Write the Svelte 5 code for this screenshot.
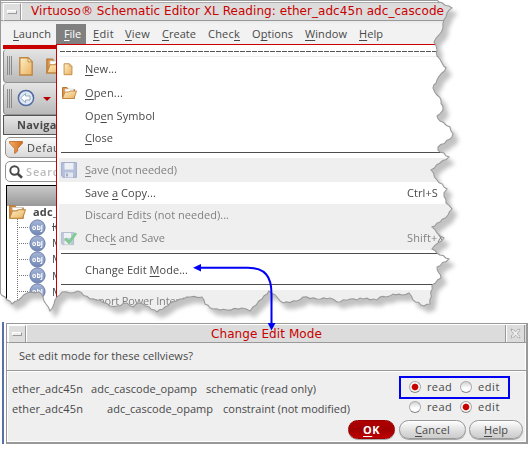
<script>
  const menus = [
    ['Launch', 0, 37, 10, 53],
    ['File', 0, 16, 8, 30],
    ['Edit', 0, 20, 7, 32],
    ['View', 0, 24, 7, 37],
    ['Create', 0, 33, 7, 46],
    ['Check', 4, 31, 7, 44],
    ['Options', 1, 40, 7, 53],
    ['Window', 0, 41, 7, 54],
    ['Help', 0, 23, 7, 40]
  ];
  const items = [
    { t: 'New...', u: 0, w: 31, h: 24, icon: 'doc' },
    { t: 'Open...', u: 0, w: 37, h: 24, icon: 'folder' },
    { t: 'Open Symbol', u: 2, w: 69, h: 22 },
    { t: 'Close', u: 0, w: 27, h: 22 },
    { sep: true, h: 9 },
    { t: 'Save (not needed)', u: 0, w: 91, h: 24, off: true, icon: 'disk' },
    { t: 'Save a Copy...', u: 5, w: 70, h: 22, key: 'Ctrl+S', kw: 30 },
    { t: 'Discard Edits (not needed)...', u: 11, w: 143, h: 22, off: true },
    { t: 'Check and Save', u: 4, w: 79, h: 24, off: true, icon: 'check', key: 'Shift+X', kw: 36 },
    { sep: true, h: 8 },
    { t: 'Change Edit Mode...', u: 12, w: 102, h: 23 },
    { sep: true, h: 9 },
    { t: 'Import Power Intent...', u: 0, w: 108, h: 22, off: true }
  ];
  const rows = [
    { cells: [['ether_adc45n', 70, 0], ['adc_cascode_opamp', 105, 9], ['schematic (read only)', 109, 10]], sel: 'read' },
    { cells: [['ether_adc45n', 70, 0], ['adc_cascode_opamp', 105, 25], ['constraint (not modified)', 126, 11]], sel: 'edit' }
  ];

  const right = [
    [437, 0], [439, 2], [452, 8], [447, 13], [444, 20], [443, 28], [439, 35], [434, 42], [437, 50], [437, 56],
    [442, 63], [446, 68], [442, 73], [437, 80], [433, 88], [437, 95], [441, 100], [443, 110], [437, 116],
    [440, 121], [450, 127], [453, 134], [450, 139], [438, 147], [438, 150], [449, 157], [440, 163], [431, 170],
    [437, 180], [447, 189], [444, 193], [446, 203], [452, 209], [448, 215], [440, 222], [432, 227], [437, 233],
    [444, 238], [438, 243], [432, 249], [437, 253], [449, 259], [437, 267], [439, 273], [441, 278], [432, 285], [430, 304]
  ];
  const bottom = [
    [424, 306], [413, 300], [409, 293], [402, 295], [393, 294], [386, 297], [380, 297], [377, 300], [360, 298],
    [357, 300], [350, 299], [337, 302], [330, 298], [317, 299], [303, 297], [297, 301], [283, 303], [277, 297],
    [269, 291], [262, 299], [253, 307], [250, 311], [242, 308], [227, 310], [213, 309], [205, 304], [202, 297],
    [190, 297], [180, 299], [173, 302], [165, 307], [157, 312], [143, 304], [139, 303], [133, 307], [127, 303],
    [117, 306], [110, 306], [100, 300], [90, 299], [78, 291], [70, 293], [62, 292], [57, 297], [54, 304], [50, 311],
    [46, 304], [43, 297], [39, 292], [27, 293], [21, 298], [12, 304], [5, 297], [0, 293]
  ];
  // Adds a small alternating notch between neighbouring points of the tear.
  function roughen(pts) {
    const out = [pts[0]];
    for (let i = 1; i < pts.length; i++) {
      const [ax, ay] = pts[i - 1];
      const [bx, by] = pts[i];
      const d = Math.hypot(bx - ax, by - ay);
      const n = Math.max(1, Math.round(d / 3.5));
      for (let k = 1; k < n; k++) {
        const s = ((i + k) % 2 ? 1 : -1) * 0.6;
        out.push([ax + ((bx - ax) * k) / n + (s * (by - ay)) / d, ay + ((by - ay) * k) / n - (s * (bx - ax)) / d]);
      }
      out.push(pts[i]);
    }
    return out;
  }
  const tear = roughen([...right, ...bottom]);
  const clip = 'polygon(0 0,' + tear.map(([x, y]) => `${x.toFixed(1)}px ${y.toFixed(1)}px`).join(',') + ')';
  const line = tear.map(([x, y]) => `${x.toFixed(1)},${y.toFixed(1)}`).join(' ');

  // Spreads letters so that the label fills the given width.
  function fit(node, w) {
    if (!w) return;
    const natural = node.getBoundingClientRect().width;
    node.style.letterSpacing = (w + 1 - natural) / node.textContent.length + 'px';
  }
</script>

{#snippet label(t, u, w)}<span class="label" use:fit={w}>{#if u >= 0}{t.slice(0, u)}<u>{t[u]}</u>{t.slice(u + 1)}{:else}{t}{/if}</span>{/snippet}

{#snippet icon(name, size)}
  <svg width={size} height={size} viewBox="0 0 16 16">
    {#if name === 'doc'}
      <path d="M3.500 2h6l3 3v9.500h-9z" fill="url(#gold)" stroke="#bd8743" />
      <path d="M9.500 2v3h3z" fill="#fff3cf" stroke="#bd8743" stroke-width=".7" />
    {:else if name === 'folder'}
      <path d="M1.500 13.500V2.500h4.500l1.500 2h6v9z" fill="#dd9447" stroke="#b87832" />
      <path d="M4 4h8.500v6H4z" fill="#fff" stroke="#ccc" stroke-width=".6" />
      <path d="M1.500 13.500l2.500-6.500h4l1-1h6.500l-2.500 7.500z" fill="url(#gold)" stroke="#bd8743" stroke-width=".9" />
    {:else if name === 'disk'}
      <path d="M.6.6h14.800v14.800H2.200L.6 14z" fill="#b5c0da" stroke="#a0acca" />
      <path d="M3.500 1h9v6.500h-9z" fill="#edf0f5" />
      <path d="M4 10.500h8v5H4z" fill="#e3e7ef" />
      <path d="M5 11.500h2v3H5z" fill="#9daac8" />
    {:else if name === 'check'}
      <path d="M.6 2.600h12v12H1.600l-1-1z" fill="#c0cadb" stroke="#b1bccf" />
      <path d="M3 3h7v5H3zM3.500 11h6v3.500h-6z" fill="#eef1f4" />
      <path d="M4.500 8.500l3.500 4 7-9.500" fill="none" stroke="#82ca92" stroke-width="2.800" />
    {/if}
  </svg>
{/snippet}

<div class="page">
  <svg class="defs" width="0" height="0">
    <defs>
      <linearGradient id="gold" x2="1" y2="1"><stop stop-color="#fff0c5" /><stop offset="1" stop-color="#e9b15f" /></linearGradient>
      <linearGradient id="ball" x2="0" y2="1"><stop stop-color="#a6b5d7" /><stop offset="1" stop-color="#7187b7" /></linearGradient>
      <linearGradient id="orange" x2="1" y2="0"><stop stop-color="#f7ae68" /><stop offset="1" stop-color="#cf6a1c" /></linearGradient>
    </defs>
  </svg>

  <div class="torn">
    <div class="editor" style:clip-path={clip}>
      <div class="titlebar">
        <div class="sysbtn"><i></i></div>
        <div class="title">{@render label('Virtuoso® Schematic Editor XL Reading: ether_adc45n adc_cascode', -1, 412)}</div>
      </div>
      <div class="menubar">
        {#each menus as [t, u, w, l, full]}
          <div class="menu" class:active={t === 'File'} style:padding-left="{l}px" style:width="{full}px">{@render label(t, u, w)}</div>
        {/each}
      </div>
      <div class="body">
        <div class="side">
          <div class="redbar"></div>
          <div class="tool t1"><b class="grip"></b>{@render icon('doc', 22)}<span class="second">{@render icon('folder', 20)}</span></div>
          <div class="tool t2">
            <b class="grip"></b>
            <svg width="18" height="18" viewBox="0 0 18 18"><circle cx="9" cy="9" r="7.600" fill="#e0e9f3" stroke="#516da2" stroke-width="1.500" /><path d="M3.500 9l5-4.500v2.500H13v4H8.500v2.500z" fill="#fff" stroke="#7e9bb8" stroke-width=".8" /></svg>
            <svg class="drop" width="8" height="4"><path d="M0 0h8l-4 4z" fill="#b40000" /></svg>
          </div>
          <div class="nav">{@render label('Navigator', -1, 56)}</div>
          <div class="field filter">
            <svg width="14" height="13" viewBox="0 0 14 13"><path d="M.5.5h13v1.500L8.700 7.500V10l-3 2.500v-5L.5 2z" fill="url(#orange)" stroke="#b96625" stroke-width=".8" /></svg>
            {@render label('Default', -1, 40)}
          </div>
          <div class="field search">
            <svg width="14" height="14" viewBox="0 0 14 14"><circle cx="5.500" cy="5.500" r="4.200" fill="none" stroke="#484848" stroke-width="1.900" /><path d="M8.700 8.700l4.300 4" stroke="#484848" stroke-width="2.600" /></svg>
            {@render label('Search', -1, 40)}
          </div>
          <div class="tree">
            <div class="treehead"></div>
            <div class="root">{@render icon('folder', 18)}{@render label('adc_cascode', -1, 70)}</div>
            <div class="kids">
              {#each ['I0', 'M0', 'M1', 'M2', 'M3'] as k, i}
                <div class="kid"><i></i>
                  <svg width="17" height="17" viewBox="0 0 17 17"><circle cx="8.500" cy="8.500" r="7.600" fill="url(#ball)" stroke="#6b7da6" /><text x="8.500" y="11" text-anchor="middle" class="obj">obj</text></svg>
                  <span class:cut={i === 0}>{k}</span></div>
              {/each}
            </div>
          </div>
        </div>
        <div class="dropmenu">
          <div class="tearoff"><svg width="400" height="2"><path d="M1 1H400" stroke="#555" stroke-width="1" stroke-dasharray="5 1" shape-rendering="crispEdges" /></svg></div>
          {#each items as it}
            {#if it.sep}
              <div class="sep" style:height="{it.h}px"></div>
            {:else}
              <div class="item" class:off={it.off} style:height="{it.h}px">
                <span class="ic">{#if it.icon}{@render icon(it.icon, it.icon === 'doc' ? 14 : 16)}{/if}</span>
                {@render label(it.t, it.u, it.w)}
                {#if it.key}<span class="key">{@render label(it.key, -1, it.kw)}</span>{/if}
              </div>
            {/if}
          {/each}
        </div>
      </div>
    </div>
    <svg class="edge" width="531" height="320"><polyline points={line} fill="none" stroke="#999" stroke-width="1.100" /></svg>
  </div>

  <div class="lower">
    <div class="bluebar"></div>
    <div class="dialog">
      <div class="dtitle">
        <div class="sysbtn"><i></i></div>
        <div class="dt">{@render label('Change Edit Mode', -1, 110)}</div>
        <div class="close"><svg width="11" height="11" viewBox="0 0 11 11"><path d="M1 1l3 1 1.500 2L7 2l3-1-1 3-2 1.500L9 7l1 3-3-1-1.500-2L4 9l-3 1 1-3 2-1.500L2 4z" fill="#eee" stroke="#999" stroke-width=".8" stroke-dasharray="2 .7" /></svg></div>
      </div>
      <div class="question">{@render label('Set edit mode for these cellviews?', -1, 173)}</div>
      <div class="rows">
        {#each rows as r, i}
          <div class="row">
            {#each r.cells as [t, w, g]}
              <span class="cell" style:margin-left="{g}px" style:width="{w}px">{@render label(t, -1, w)}</span>
            {/each}
            <div class="choice" class:framed={i === 0}>
              <span class="radio" class:on={r.sel === 'read'}></span><span class="opt">{@render label('read', -1, 24)}</span>
              <span class="radio" class:on={r.sel === 'edit'}></span><span class="opt">{@render label('edit', -1, 21)}</span>
            </div>
          </div>
        {/each}
      </div>
      <div class="buttons">
        <div class="btn ok">{@render label('OK', 0, 16)}</div>
        <div class="btn cancel">{@render label('Cancel', 0, 34)}</div>
        <div class="btn help">{@render label('Help', 0, 23)}</div>
      </div>
    </div>
  </div>

  <svg class="arrow" width="531" height="340">
    <path d="M198 267.800H248C265 268 271.500 276 271.500 294V326" fill="none" stroke="#0000f5" stroke-width="2" />
    <path d="M193 267.800l8-3.700v7.400zM267.700 323h7.800l-4 7.500z" fill="#0000f5" />
  </svg>
</div>

<style>
  :global(body) { margin: 0; background: #fff; }
  .page { position: relative; width: 531px; height: 450px; overflow: hidden; background: #fff; font: 11px/16px "Open Sans", "Noto Sans", sans-serif; color: #484848; display: flex; flex-direction: column; }
  .page * { box-sizing: border-box; }
  .defs { position: absolute; }
  svg { display: block; flex: none; }
  .label { white-space: pre; display: inline-block; flex: none; }
  u { text-decoration: underline; text-decoration-thickness: 1px; text-underline-offset: 2px; text-decoration-skip-ink: none; }
  .torn { position: relative; height: 322px; flex: none; filter: drop-shadow(5px 6px 2px rgba(0, 0, 0, .24)); }
  .editor { width: 531px; height: 320px; background: #fff; display: flex; flex-direction: column; }
  .edge { position: absolute; left: 0; top: 0; }
  .arrow { position: absolute; left: 0; top: 0; }

  .titlebar { height: 21px; border-top: 1px solid #999; border-left: 1px solid #999; border-bottom: 1px solid #999; background: #dcdcdc; display: flex; padding-left: 2px; box-shadow: inset 0 1px #fff, inset 0 2px #aaa; flex: none; padding-top: 2px; }
  .sysbtn { width: 18px; height: 18px; border: 1px solid #fff; border-right-color: #999; border-bottom-color: #999; background: #dedede; display: flex; align-items: center; justify-content: center; flex: none; }
  .sysbtn i { width: 10px; height: 4px; background: #eee; border: 1px solid #fff; border-right-color: #999; border-bottom-color: #999; }
  .title { font: 12px/17px "DejaVu Sans", sans-serif; color: #c80000; border-left: 1px solid #fff; padding-left: 9px; flex: 1; }

  .menubar { height: 23px; background: linear-gradient(#e8e8e8, #f2f2f2 3px); border-left: 1px solid #999; padding: 3px 0 0 2px; display: flex; flex: none; }
  .menu { height: 20px; line-height: 20px; flex: none; }
  .menu.active { background: #808080; color: #fff; }
  .body { display: flex; flex: 1; min-height: 0; border-left: 1px solid #999; padding-left: 2px; }
  .side { width: 53px; overflow: hidden; flex: none; display: flex; flex-direction: column; }
  .redbar { height: 5px; background: #c80000; border-top: 1px solid #efefef; flex: none; }
  .tool { display: flex; align-items: center; background: linear-gradient(#e5e5e5, #b9b9b9); border-left: 1px solid #888; border-bottom: 1px solid #929292; border-radius: 4px 0 0 4px; padding-left: 3px; flex: none; }
  .t1 { height: 34px; }
  .t2 { height: 32px; padding-bottom: 1px; }
  .grip { width: 5px; height: 19px; border-left: 1px solid #8a8a8a; border-right: 1px solid #8a8a8a; background: linear-gradient(90deg, transparent 1px, #8a8a8a 1px 2px, transparent 2px); margin-right: 5px; flex: none; }
  .t1 .grip { margin-right: 3px; }
  .second { margin-left: 8px; }
  .drop { margin-left: 8px; margin-top: 2px; }
  .nav { height: 20px; flex: none; border: 1px solid #555; border-right: 0; background: linear-gradient(#e6e6e6, #c4c4c4); padding-left: 13px; line-height: 17px; font-weight: 700; }
  .field { height: 21px; flex: none; margin-left: 2px; border: 1px solid #929292; border-radius: 5px; width: 80px; display: flex; align-items: center; }
  .filter { margin-top: 2px; padding-left: 3px; gap: 4px; background: linear-gradient(#fafafa, #d9d9d9); }
  .search { margin-top: 3px; padding-left: 3px; gap: 3px; background: #fff; color: #bbb; font-weight: 600; }
  .tree { margin: 3px 0 0 3px; border-left: 1px solid #000; border-top: 1px solid #000; background: #fff; width: 80px; flex: 1; }
  .treehead { height: 20px; background: linear-gradient(#c8c8c8, #999); }
  .root { height: 11px; display: flex; align-items: center; gap: 6px; font-weight: 700; padding-left: 1px; }
  .root .label { padding-left: 1px; }
  .kids { margin-left: 10px; border-left: 1px dotted #777; margin-top: 2px; }
  .kid { height: 16.200px; display: flex; align-items: center; }
  .kid i { width: 9px; margin: 0 1px 0 1px; border-top: 1px dotted #777; flex: none; }
  .kid span { margin-left: 6px; }
  .cut { text-decoration: line-through; }
  .obj { font: 700 7px "Open Sans", sans-serif; fill: #fff; }

  .dropmenu { flex: 1; background: #fff; border-top: 1px solid #c80000; border-left: 1px solid #c80000; padding-left: 2px; display: flex; flex-direction: column; }
  .tearoff { height: 12px; border-bottom: 1px solid #eee; padding-top: 5px; flex: none; }
  .item { display: flex; align-items: center; flex: none; }
  .off { background: #efefef; color: #808080; }
  .ic { width: 26px; padding-left: 2px; flex: none; }
  .key { margin-left: auto; width: 124px; }
  .sep { flex: none; padding: 3px 0 0 2px; }
  .sep::before { content: ""; display: block; height: 1px; background: #4d4d4d; }

  .lower { display: flex; padding-left: 2px; flex: none; }
  .bluebar { width: 2px; height: 122px; background: #5870a8; margin-right: 2px; }
  .dialog { margin-top: 1px; width: 522px; height: 121px; background: #efefef; border: 1px solid #999; border-right-width: 2px; border-bottom-width: 2px; box-shadow: inset 1px 1px #fff, inset -1px -1px #fff; display: flex; flex-direction: column; }
  .dtitle { display: flex; height: 19px; padding: 1px 1px 0; background: #dcdcdc; border-bottom: 1px solid #999; box-shadow: inset 1px 1px #fff; flex: none; }
  .dt { flex: 1; border-left: 1px solid #fff; border-right: 1px solid #999; font: 12px/18px "DejaVu Sans", sans-serif; color: #c80000; padding-left: 184px; }
  .close { width: 19px; display: flex; justify-content: center; align-items: center; border-left: 1px solid #fff; border-right: 1px solid #999; }
  .question { height: 28px; padding: 4px 0 0 12px; line-height: 18px; border-bottom: 1px solid #999; box-shadow: 0 1px #fff; flex: none; }
  .rows { padding-top: 6px; height: 46px; flex: none; }
  .row { height: 20px; display: flex; align-items: center; padding: 3px 16px 0 5px; }
  .cell { flex: none; }
  .choice { margin-left: auto; width: 111px; height: 23px; padding-left: 8px; display: flex; align-items: center; flex: none; border: 2px solid transparent; margin-top: -3px; }
  .framed { border-color: #0000f5; }
  .radio { width: 12px; height: 12px; border-radius: 50%; background: linear-gradient(#d2d2d2, #fff 60%); border: 1px solid #aaa; border-bottom-color: #888; flex: none; }
  .on { background: radial-gradient(circle, #c80000 0 2.800px, #f7f7f7 3.800px); }
  .opt { margin-left: 6px; width: 33px; flex: none; }
  .buttons { display: flex; justify-content: flex-end; gap: 3px; padding-right: 3px; padding-top: 3px; }
  .btn { height: 19px; border-radius: 10px; display: flex; justify-content: center; line-height: 18px; border: 1px solid #999; background: linear-gradient(#fff, #ddd 60%, #ccc); box-shadow: 0 1px #aaa; }
  .ok { width: 47px; background: linear-gradient(#b00000, #a00000 50%, #c00000); color: #fff; font-weight: 700; border-color: #900; margin-right: 1px; }
  .cancel { width: 67px; }
  .help { width: 54px; }
</style>
